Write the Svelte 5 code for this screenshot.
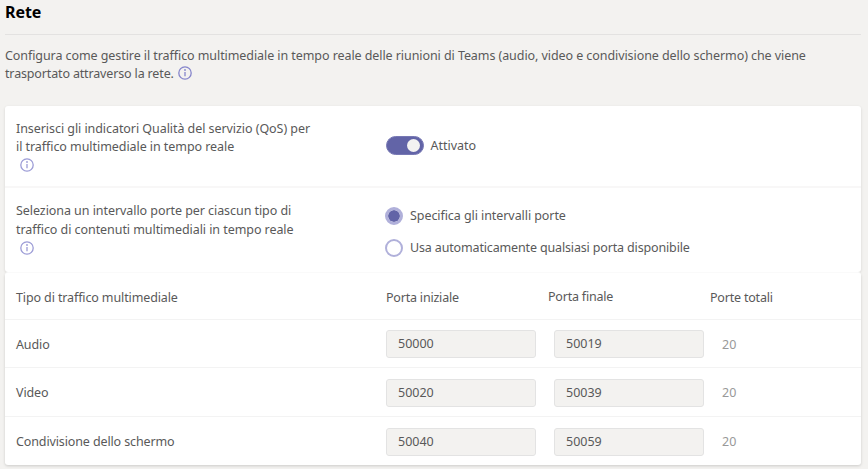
<script>
  const rows = [
    { name: 'Audio', start: '50000', end: '50019', total: 20 },
    { name: 'Video', start: '50020', end: '50039', total: 20 },
    { name: 'Condivisione dello schermo', start: '50040', end: '50059', total: 20 }
  ];
</script>

{#snippet info()}
  <svg class="info" width="14" height="14" viewBox="0 0 14 14" fill="none" aria-hidden="true">
    <circle cx="7" cy="7" r="6.2" stroke="currentColor" stroke-width="1.3" />
    <path d="M7 6v4.3" stroke="currentColor" stroke-width="1.3" />
    <circle cx="7" cy="4" r="0.9" fill="currentColor" />
  </svg>
{/snippet}

<main>
  <h1>Rete</h1>
  <p class="intro">
    <span class="l1">Configura come gestire il traffico multimediale in tempo reale delle riunioni di Teams (audio, video e condivisione dello schermo) che viene</span><br />
    <span class="l2">trasportato attraverso la rete.</span>{@render info()}
  </p>

  <section class="card settings">
    <div class="setting qos">
      <div class="label">
        <span>Inserisci gli indicatori Qualità del servizio (QoS) per</span><br />
        <span>il traffico multimediale in tempo reale</span>
        <div class="hint">{@render info()}</div>
      </div>
      <div class="toggle-row">
        <span class="toggle"><span class="thumb"></span></span>
        <span class="on">Attivato</span>
      </div>
    </div>
    <div class="setting ports">
      <div class="label">
        <span>Seleziona un intervallo porte per ciascun tipo di</span><br />
        <span>traffico di contenuti multimediali in tempo reale</span>
        <div class="hint">{@render info()}</div>
      </div>
      <div class="radios">
        <div class="option"><span class="radio checked"></span><span>Specifica gli intervalli porte</span></div>
        <div class="option auto"><span class="radio"></span><span>Usa automaticamente qualsiasi porta disponibile</span></div>
      </div>
    </div>
  </section>

  <section class="card table">
    <div class="row head">
      <span class="c1">Tipo di traffico multimediale</span>
      <span class="h2">Porta iniziale</span>
      <span class="h3">Porta finale</span>
      <span class="h4">Porte totali</span>
    </div>
    {#each rows as r}
      <div class="row">
        <span class="c1">{r.name}</span>
        <span class="field">{r.start}</span>
        <span class="field">{r.end}</span>
        <span class="total">{r.total}</span>
      </div>
    {/each}
  </section>
</main>

<style>
  :global(body) {
    background: #f3f2f0;
    overflow: hidden;
  }
  main {
    box-sizing: border-box;
    height: 469px;
    padding: 0 7.5px 0 5px;
    font-family: 'Noto Sans', 'Open Sans', sans-serif;
    font-size: 12.5px;
    line-height: 18px;
    color: #595959;
    white-space: nowrap;
  }
  h1 {
    margin: 0;
    height: 34px;
    border-bottom: 1px solid #e3e2e1;
    font-size: 16px;
    line-height: 25px;
    font-weight: 700;
    letter-spacing: -0.05px;
    color: #000;
  }
  .intro {
    margin: 0;
    height: 59px;
    padding-top: 12px;
  }
  .l1 {
    letter-spacing: -0.073px;
  }
  .l2 {
    letter-spacing: -0.15px;
  }
  .info {
    color: #9c9cd6;
    vertical-align: -2px;
    display: inline-block;
  }
  .intro .info {
    margin-left: 4px;
    color: #8585cb;
  }
  .card {
    background: #fff;
    border-radius: 3px;
    box-shadow: 0 1px 3px rgba(0, 0, 0, 0.13);
  }
  .settings {
    height: 166px;
  }
  .setting {
    box-sizing: border-box;
    display: flex;
    padding-left: 11px;
  }
  .qos {
    height: 82px;
    padding-top: 14px;
    border-bottom: 2px solid #f8f7f7;
  }
  .ports {
    height: 84px;
    padding-top: 13px;
  }
  .ports .label {
    line-height: 19px;
  }
  .label {
    width: 369.5px;
    letter-spacing: -0.06px;
  }
  .hint {
    display: flex;
    margin: 2px 0 0 4px;
  }
  .toggle-row {
    display: flex;
    align-items: center;
    gap: 7px;
    height: 38px;
    margin-top: 6px;
  }
  .on {
    padding-top: 2px;
  }
  .toggle {
    box-sizing: border-box;
    display: flex;
    justify-content: flex-end;
    align-items: center;
    width: 38px;
    height: 19px;
    border: 1px solid #7778b4;
    border-radius: 10px;
    padding-right: 3px;
    background: #6264a7;
  }
  .thumb {
    width: 13px;
    height: 13px;
    border-radius: 50%;
    background: #f3f2f1;
  }
  .radios {
    display: flex;
    flex-direction: column;
    gap: 14px;
    margin: 6px 0 0 -0.5px;
    letter-spacing: -0.07px;
  }
  .auto {
    letter-spacing: -0.15px;
  }
  .option {
    display: flex;
    align-items: center;
    gap: 7px;
    height: 18px;
  }
  .radio {
    box-sizing: border-box;
    width: 18px;
    height: 18px;
    border: 2px solid #b0b0da;
    border-radius: 50%;
  }
  .checked {
    border-width: 3px;
    background: #6264a7;
    background-clip: padding-box;
  }
  .table {
    position: relative;
    height: 192px;
    margin-top: 1px;
    box-shadow:
      0 -1px 0 #fafafa,
      0 1px 3px rgba(0, 0, 0, 0.16);
    clip-path: inset(-1px -5px -5px);
  }
  .row {
    box-sizing: border-box;
    display: flex;
    align-items: center;
    height: 49px;
    padding: 1px 0 0 11px;
    border-bottom: 1px solid #f3f3f3;
  }
  .row:nth-child(2) {
    height: 48px;
  }
  .row:last-child {
    border-bottom: 0;
    height: 48px;
  }
  .row:not(.head) .c1,
  .total {
    padding-top: 1px;
  }
  .head {
    height: 47px;
    padding-top: 3px;
  }
  .c1 {
    width: 370px;
    letter-spacing: -0.12px;
  }
  .h2,
  .h3 {
    width: 162px;
  }
  .h2,
  .h3,
  .h4 {
    letter-spacing: -0.2px;
  }
  .h3 {
    margin-top: -2px;
  }
  .field {
    box-sizing: border-box;
    width: 150px;
    height: 28px;
    margin-right: 18px;
    padding-left: 11px;
    border: 1px solid #e3e3e3;
    border-radius: 3px;
    background: #f3f2f0;
    line-height: 26px;
  }
  .total {
    color: #999;
  }
</style>
